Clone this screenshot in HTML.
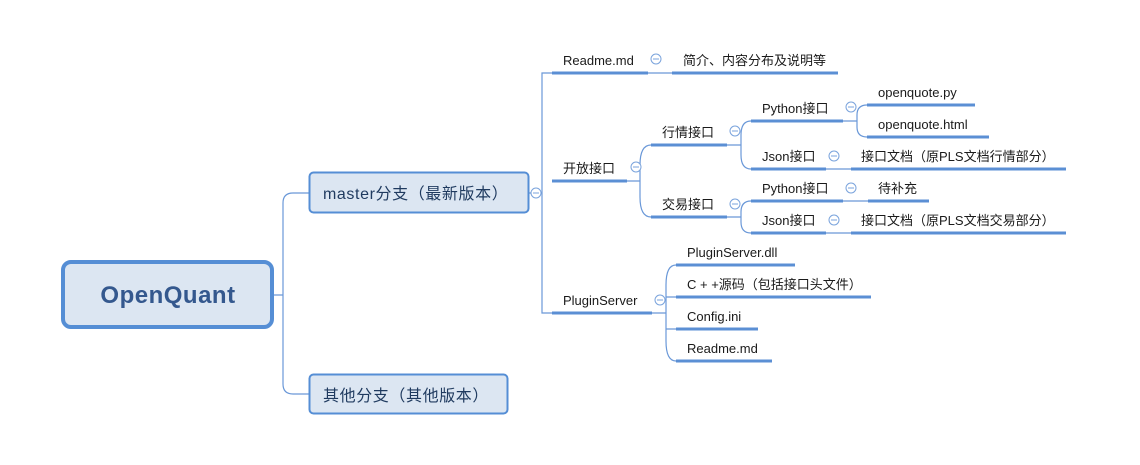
<!DOCTYPE html>
<html><head><meta charset="utf-8"><style>
html,body{margin:0;padding:0;background:#fff;width:1140px;height:465px;overflow:hidden}
svg text{font-family:"Liberation Sans","Noto Sans CJK SC",sans-serif;font-size:13px;fill:#1a1a1a}
</style></head><body>
<svg width="1140" height="465" viewBox="0 0 1140 465" xmlns="http://www.w3.org/2000/svg">
<g fill="none" stroke="#6a98d8" stroke-width="1.2">
<path d="M274 295H283 M283 295V203Q283 193 293 193H309 M283 295V384Q283 394 293 394H309"/>
<path d="M529 193H542 M552 73H542V313H552"/>
<path d="M648 73H672"/>
<path d="M627 181H640 M651 145Q640 145 640 165V197Q640 217 651 217"/>
<path d="M727 145H741 M751 121Q741 121 741 135V155Q741 169 751 169"/>
<path d="M727 217H741 M751 201Q741 201 741 212V222Q741 233 751 233"/>
<path d="M843 121H857 M867 105Q857 105 857 115V127Q857 137 867 137"/>
<path d="M826 169H851 M843 201H868 M826 233H851"/>
<path d="M652 313H666 M676 265Q666 265 666 285V341Q666 361 676 361 M666 297Q666 297 676 297 M666 329Q666 329 676 329"/>
</g>
<g stroke="#5b8fd4" stroke-width="3" fill="none">
<path d="M552 73H648 M672 73H838 M552 181H627 M552 313H652"/>
<path d="M651 145H727 M651 217H727"/>
<path d="M751 121H843 M751 169H826 M851 169H1066 M751 201H843 M868 201H929 M751 233H826 M851 233H1066"/>
<path d="M867 105H975 M867 137H989"/>
<path d="M676 265H795 M676 297H871 M676 329H758 M676 361H772"/>
</g>
<rect x="63" y="262" width="209" height="65" rx="8" fill="#dce6f2" stroke="#558ed5" stroke-width="4"/>
<rect x="309.5" y="172.5" width="219" height="40" rx="4" fill="#dce6f2" stroke="#558ed5" stroke-width="2"/>
<rect x="309.5" y="374.5" width="198" height="39" rx="4" fill="#dce6f2" stroke="#558ed5" stroke-width="2"/>
<text x="168" y="303" text-anchor="middle" style="font-size:24px;font-weight:bold;fill:#34588e;letter-spacing:0.5px">OpenQuant</text>
<text x="323" y="199" style="font-size:16px;fill:#1f3a5f;letter-spacing:0.6px">master分支（最新版本）</text>
<text x="323" y="401" style="font-size:16px;fill:#1f3a5f;letter-spacing:0.6px">其他分支（其他版本）</text>
<g fill="#fff" stroke="#7aa3dc" stroke-width="1">
<circle cx="536" cy="193" r="5"/><circle cx="656" cy="59" r="5"/><circle cx="636" cy="167" r="5"/><circle cx="660" cy="300" r="5"/>
<circle cx="735" cy="131" r="5"/><circle cx="735" cy="204" r="5"/><circle cx="851" cy="107" r="5"/><circle cx="834" cy="156" r="5"/>
<circle cx="851" cy="188" r="5"/><circle cx="834" cy="220" r="5"/>
</g>
<g stroke="#7aa3dc" stroke-width="1">
<path d="M533 193h6 M653 59h6 M633 167h6 M657 300h6 M732 131h6 M732 204h6 M848 107h6 M831 156h6 M848 188h6 M831 220h6"/>
</g>
<text x="563" y="65">Readme.md</text>
<text x="683" y="65">简介、内容分布及说明等</text>
<text x="563" y="173">开放接口</text>
<text x="563" y="305">PluginServer</text>
<text x="662" y="137">行情接口</text>
<text x="662" y="209">交易接口</text>
<text x="762" y="113">Python接口</text>
<text x="762" y="161">Json接口</text>
<text x="762" y="193">Python接口</text>
<text x="762" y="225">Json接口</text>
<text x="878" y="97">openquote.py</text>
<text x="878" y="129">openquote.html</text>
<text x="861" y="161">接口文档（原PLS文档行情部分）</text>
<text x="878" y="193">待补充</text>
<text x="861" y="225">接口文档（原PLS文档交易部分）</text>
<text x="687" y="257">PluginServer.dll</text>
<text x="687" y="289">C + +源码（包括接口头文件）</text>
<text x="687" y="321">Config.ini</text>
<text x="687" y="353">Readme.md</text>
</svg>
</body></html>
